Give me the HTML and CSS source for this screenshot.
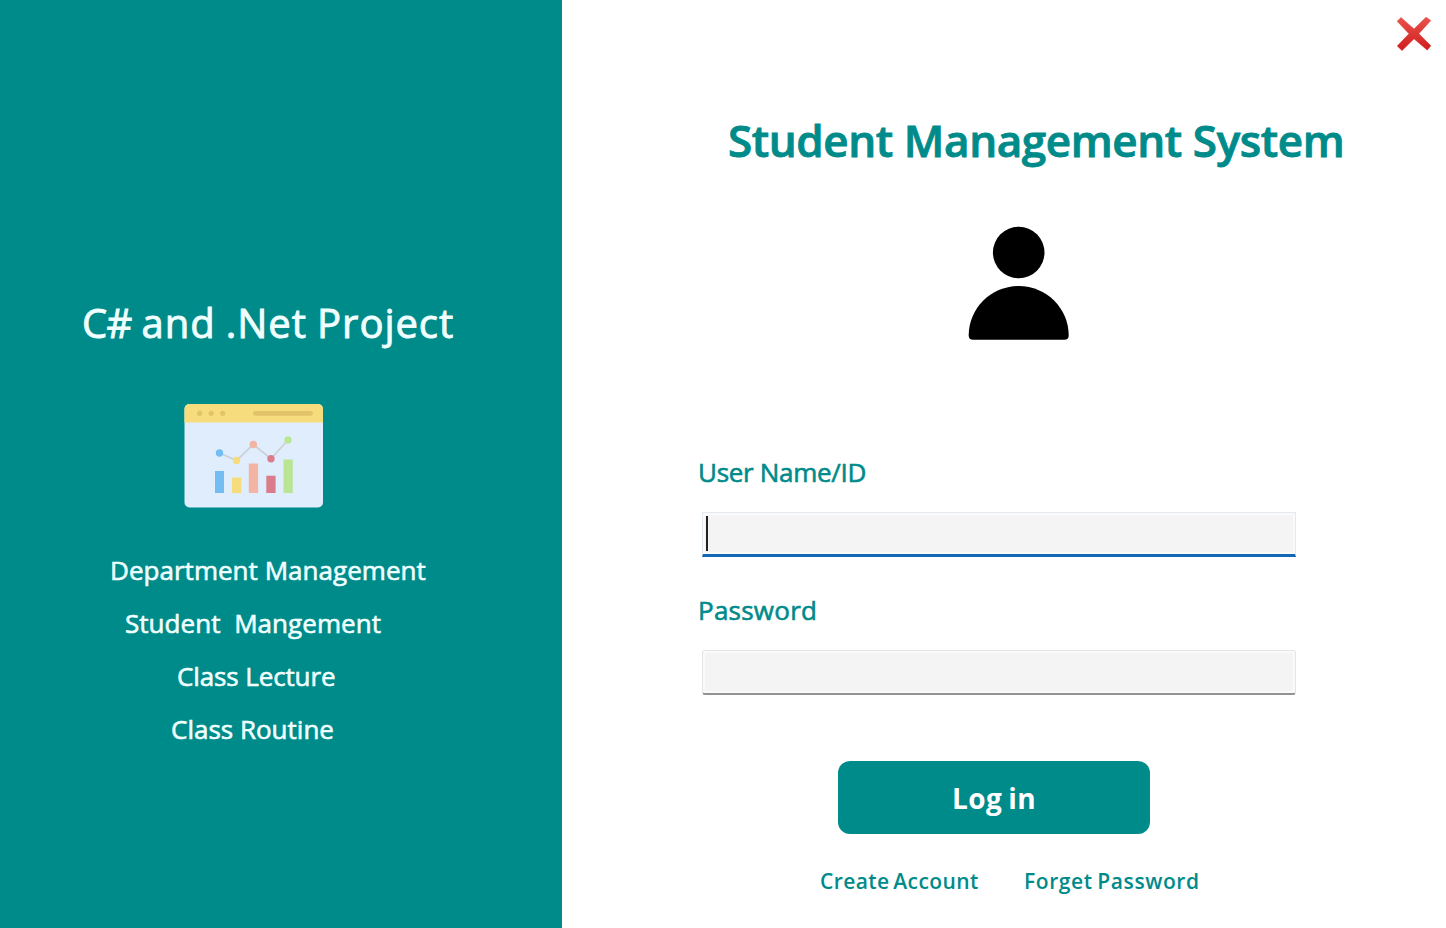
FILE: index.html
```html
<!DOCTYPE html>
<html lang="en">
<head>
<meta charset="utf-8">
<title>Student Management System</title>
<link rel="stylesheet" href="styles.css">
</head>
<body>
<div class="window">
  <aside class="sidebar">
    <h2 class="project"><span class="csharp">C#</span> and .Net Project</h2>
    <svg class="chart" width="140" height="105" viewBox="0 .5 140 105">
      <rect x=".5" y=".5" width="138.500" height="103.500" rx="5" fill="#e0edfd"/>
      <path d="M.5 19V5.500a5 5 0 0 1 5-5h128.500a5 5 0 0 1 5 5V19z" fill="#f6dc7c"/>
      <g fill="#e3c36a"><circle cx="15.700" cy="9.800" r="2.600"/><circle cx="27.200" cy="9.800" r="2.600"/><circle cx="38.700" cy="9.800" r="2.600"/><rect x="69" y="7.400" width="60" height="4.800" rx="2.400"/></g>
      <path d="M35.500 49.500L52.600 57 69.300 41 87 55.200 104 36.500" fill="none" stroke="#c9d0d6" stroke-width="1.700"/>
      <g fill="#74bdf2"><circle cx="35.500" cy="49.500" r="3.700"/><rect x="31" y="67.500" width="9" height="22"/></g>
      <g fill="#f6dc7c"><circle cx="52.600" cy="57" r="3.700"/><rect x="48" y="74" width="9.300" height="15.500"/></g>
      <g fill="#f3b4a3"><circle cx="69.300" cy="41" r="3.700"/><rect x="64.800" y="60" width="9.300" height="29.500"/></g>
      <g fill="#d97d8c"><circle cx="87" cy="55.200" r="3.700"/><rect x="82.300" y="72.200" width="9.300" height="17.300"/></g>
      <g fill="#b9e594"><circle cx="104" cy="36.500" r="3.700"/><rect x="99.500" y="56" width="9.300" height="33.500"/></g>
    </svg>
    <ul class="modules">
      <li class="module department">Department Management</li>
      <li class="module student">Student&nbsp; Mangement</li>
      <li class="module lecture">Class Lecture</li>
      <li class="module routine">Class Routine</li>
    </ul>
  </aside>
  <main class="login">
    <button class="close" aria-label="Close">
      <svg width="36" height="36" viewBox="0 0 36 36">
        <defs><linearGradient id="red" x1="0" y1="0" x2="0" y2="1"><stop offset="0" stop-color="#e8534c"/><stop offset="1" stop-color="#d01c1c"/></linearGradient></defs>
        <path d="M5 1.500L18 13 30 1.200 34.800 4.500 22.800 17.700 34.800 29.800 31.200 34 18 22.800 6 34.500 1.300 30 13 17.700 1.200 5.300z" fill="url(#red)" stroke="url(#red)" stroke-width=".6" stroke-linejoin="round"/>
      </svg>
    </button>
    <h1 class="title">Student Management System</h1>
    <svg class="avatar" width="102" height="114" viewBox="0 -.5 102 114">
      <circle cx="50.700" cy="26" r="25.800"/>
      <path d="M.7 109C.7 82 23 59.600 50.700 59.600S100.700 82 100.700 109q0 4.300-4.500 4.300h-91Q.7 113.300.7 109z"/>
    </svg>
    <form class="form">
      <label class="label user-label" for="user">User Name/ID</label>
      <div class="field active" id="user"><span class="caret"></span></div>
      <label class="label pass-label" for="pass">Password</label>
      <div class="field" id="pass"></div>
      <button class="submit" type="button"><span class="submit-text">Log in</span></button>
      <nav class="links"><a class="link create">Create Account</a><a class="link forget">Forget Password</a></nav>
    </form>
  </main>
</div>
</body>
</html>
```
FILE: styles.css
```css
* { box-sizing: border-box; }
body { margin: 0; font-family: "Open Sans", "Noto Sans", sans-serif; background: #fff; }
.window { display: flex; width: 1446px; height: 928px; overflow: hidden; }
.sidebar { width: 562px; background: #008b8b; color: #f0ffff; padding-top: 293px; }
.project { margin: 0 0 0 82px; font-size: 40px; line-height: 60px; font-weight: 400; letter-spacing: .95px; word-spacing: -1.2px; white-space: pre; -webkit-text-stroke: .9px currentColor; }
.csharp { letter-spacing: -.8px; }
.chart { display: block; margin: 51px 0 0 184px; }
.modules { list-style: none; margin: 35px 0 0; padding: 0; }
.module { font-size: 26px; line-height: 53px; font-weight: 400; white-space: pre; -webkit-text-stroke: .6px currentColor; }
.department { margin-left: 110px; letter-spacing: .03px; }
.student { margin-left: 125px; line-height: 52px; letter-spacing: .05px; }
.lecture { margin-left: 177px; line-height: 55px; letter-spacing: -.12px; }
.routine { margin-left: 171px; line-height: 51px; }
.login { flex: 1; display: flex; flex-direction: column; align-items: flex-start; background: #fff; color: #008b8b; }
.close { align-self: flex-end; margin: 16px 14px 0 0; padding: 0; border: 0; background: none; height: 36px; }
.close svg { display: block; }
.title { margin: 58px 0 0 166px; font-size: 44px; line-height: 60px; font-weight: 600; letter-spacing: -.4px; white-space: pre; -webkit-text-stroke: .9px currentColor; }
.avatar { margin: 56px 0 0 406px; fill: #000; }
.form { margin: 112px 0 0 136px; display: flex; flex-direction: column; align-items: flex-start; }
.label { font-size: 26px; line-height: 40px; font-weight: 400; white-space: pre; -webkit-text-stroke: .6px currentColor; }
.user-label { letter-spacing: -.3px; }
.field { width: 594px; height: 45px; margin: 20px 0 0 4px; border: 1px solid #e5e5e5; border-bottom: 2px solid #929292; border-radius: 3px; background: #f4f4f4; box-shadow: inset 0 0 0 2px #fafafa; }
.active { border: 1px solid #e3e9ef; border-bottom: 3px solid #1269b5; border-radius: 0; padding: 3px 0 0 3px; }
.caret { display: block; width: 2px; height: 35px; background: #222; }
.pass-label { margin-top: 33px; letter-spacing: .25px; }
.submit { width: 312px; height: 73px; margin: 66px 0 0 140px; border: 0; border-radius: 12px; background: #008b8b; color: #fff; font: 700 28px/40px "Open Sans", sans-serif; letter-spacing: .5px; word-spacing: -2px; }
.links { display: flex; margin: 32px 0 0 122px; }
.link { font-size: 21px; line-height: 30px; font-weight: 600; white-space: pre; }
.create { width: 204px; letter-spacing: .4px; word-spacing: -2px; }
.forget { letter-spacing: .6px; word-spacing: -1.5px; }
```
